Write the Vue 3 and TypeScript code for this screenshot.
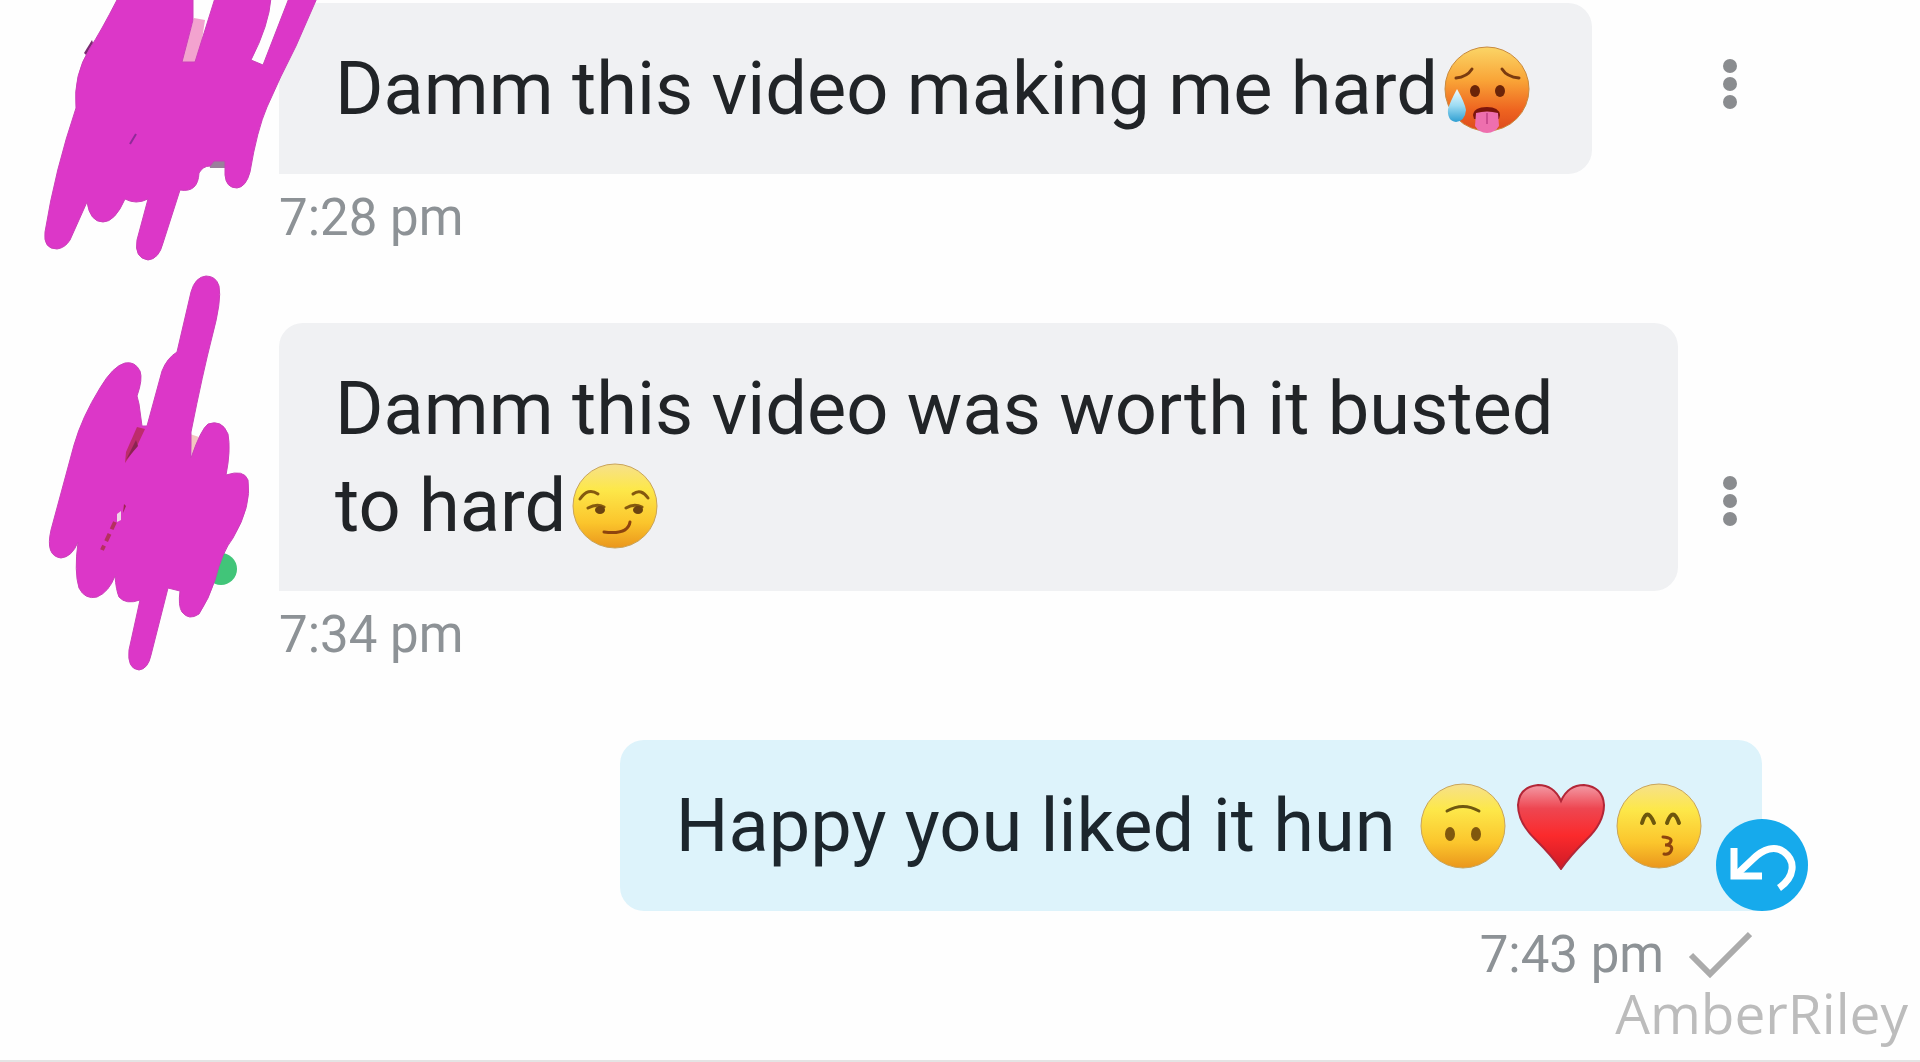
<script setup lang="ts">
type Emoji = 'hot' | 'smirk' | 'upside' | 'heart' | 'kiss'

interface Message {
  id: number
  own: boolean
  text: string
  emojis: Emoji[]
  time: string
}

const messages: Message[] = [
  { id: 1, own: false, text: 'Damm this video making me hard', emojis: ['hot'], time: '7:28 pm' },
  { id: 2, own: false, text: 'Damm this video was worth it busted to hard', emojis: ['smirk'], time: '7:34 pm' },
  { id: 3, own: true, text: 'Happy you liked it hun ', emojis: ['upside', 'heart', 'kiss'], time: '7:43 pm' },
]

const labels: Record<Emoji, string> = {
  hot: 'hot face',
  smirk: 'smirking face',
  upside: 'upside-down face',
  heart: 'red heart',
  kiss: 'kissing face with smiling eyes',
}
</script>

<template>
  <main class="chat">
    <svg class="defs" width="0" height="0" aria-hidden="true">
      <defs>
        <linearGradient id="g-face" x1="0" y1="0" x2="0" y2="1">
          <stop offset="0" stop-color="#f6e08c" />
          <stop offset="0.3" stop-color="#fde84a" />
          <stop offset="0.7" stop-color="#fbc52c" />
          <stop offset="1" stop-color="#ea961c" />
        </linearGradient>
        <linearGradient id="g-hot" x1="0" y1="0" x2="0" y2="1">
          <stop offset="0" stop-color="#fbd566" />
          <stop offset="0.4" stop-color="#f9a437" />
          <stop offset="0.75" stop-color="#ee6420" />
          <stop offset="1" stop-color="#dd4a1c" />
        </linearGradient>
        <linearGradient id="g-heart" x1="0" y1="0" x2="0" y2="1">
          <stop offset="0" stop-color="#f39aa5" />
          <stop offset="0.28" stop-color="#ee4651" />
          <stop offset="0.6" stop-color="#fb2a2c" />
          <stop offset="1" stop-color="#cf1a26" />
        </linearGradient>
        <linearGradient id="g-drop" x1="0" y1="0" x2="0" y2="1">
          <stop offset="0" stop-color="#f2fbfe" />
          <stop offset="0.5" stop-color="#9ddcf3" />
          <stop offset="1" stop-color="#2f9fd2" />
        </linearGradient>
      </defs>
    </svg>

    <article v-for="m in messages" :key="m.id" class="row" :class="{ own: m.own }">
      <div v-if="!m.own" class="avatar">
        <svg v-if="m.id === 1" class="scribble first" viewBox="0 0 320 270" aria-hidden="true">
          <path fill="#f3a3cf" d="M194 18L205 20L198 66H180Z" />
          <path fill="#9a7f9c" d="M208 158H228V168H210Z" />
          <path fill="#7b2a72" d="M92 40L84 53L87 56L94 46Z" />
          <path
            fill="#dc37c8"
            stroke="#cb3fba"
            stroke-width="1"
            d="M118 -2Q100 33 90 48Q73 75 76 108Q55 170 45 232Q43 249 57 249Q65 248 70 240L87 202Q90 222 103 222Q115 222 125 199Q136 205 148 199L137 240Q134 258 148 260Q159 259 163 243L180 190Q198 193 199 173Q203 166 210 166L214 161H225V175Q226 188 237 188Q246 187 250 172Q257 130 267 107Q280 77 296 46L317 -2H289L263 65L251 60Q269 25 271 -2H215L195 62H182L193 20V-2Z"
          />
          <path fill="none" stroke="#8f2a98" stroke-width="2" d="M136 134L130 144" />
        </svg>
        <svg v-else class="scribble second" viewBox="0 270 320 410" aria-hidden="true">
          <circle cx="221" cy="569" r="16" fill="#41c579" />
          <path fill="#f2c5c0" d="M190 434L199 437L192 456Z" />
          <path
            fill="#dc37c8"
            stroke="#cb3fba"
            stroke-width="1"
            d="M206 276Q195 277 191 292L177 352Q167 358 162 371L147 426H142L139 404L137 396Q143 379 140 371Q135 361 125 363Q113 366 100 388Q82 417 74 445L51 530Q45 556 61 558Q72 557 78 542Q74 572 79 588Q85 600 97 597Q109 592 115 576Q116 590 119 597Q126 605 140 600L129 650Q127 669 139 670Q148 669 151 655L168 588L180 591Q178 606 182 612Q189 621 199 614Q209 599 215 580Q222 552 233 538Q252 506 248 480Q244 469 226 475Q231 450 228 434Q222 419 208 424Q201 429 191 458V432Q203 372 212 337Q222 300 219 286Q216 276 206 276Z"
          />
          <path fill="#bd2c6c" d="M137 427L145 429L138 444L125 463L126 452Z" />
          <path fill="#8a2450" d="M136 440L126 460L138 446Z" />
          <path fill="#efd6e6" d="M117 514L121 511V520L117 522Z" />
          <path fill="#9d254f" d="M124 504L126 506L123 513Z" />
          <path fill="none" stroke="#b5305f" stroke-width="4" stroke-dasharray="8 5" d="M115 522L102 550" />
        </svg>
      </div>

      <div class="content">
        <div class="bubble">
          <p class="text">{{ m.text }}<template v-for="e in m.emojis" :key="e"><svg class="emoji" viewBox="0 0 98 88" role="img" :aria-label="labels[e]">
              <template v-if="e === 'hot'">
                <circle cx="49" cy="44" r="42" fill="url(#g-hot)" stroke="#c98a3e" stroke-width="1" />
                <g fill="none" stroke="#7a3b10" stroke-width="3" stroke-linecap="round">
                  <path d="M18 33Q29 32 34 24" />
                  <path d="M64 24Q69 32 81 33" />
                </g>
                <ellipse cx="37" cy="46" rx="5" ry="6" fill="#6b2408" />
                <ellipse cx="62" cy="46" rx="5" ry="6" fill="#6b2408" />
                <path fill="#7c150c" d="M35 70Q36 62 49 62Q61 62 62 70L61 74H36Z" />
                <path fill="#ee6fae" d="M38 68Q49 65 60 68L61 81Q57 88 49 88Q41 88 37 81Z" />
                <path stroke="#cc4c90" stroke-width="2" d="M49 68V79" />
                <path fill="url(#g-drop)" d="M19 44Q12 57 10 64Q9 76 18 77Q27 76 28 65Q27 58 19 44Z" />
              </template>
              <template v-else-if="e === 'smirk'">
                <circle cx="49" cy="44" r="42" fill="url(#g-face)" stroke="#c9a45a" stroke-width="1" />
                <g fill="none" stroke="#84590f" stroke-width="3" stroke-linecap="round">
                  <path d="M14 37Q22 25 32 32" />
                  <path d="M67 32Q75 26 82 36" />
                  <path d="M22 46Q31 41 38 45" />
                  <path d="M60 46Q68 41 76 45" />
                  <path stroke="#8d440e" d="M38 70Q62 73 64 60" />
                </g>
                <ellipse cx="34" cy="48" rx="5" ry="4" fill="#6b4310" />
                <ellipse cx="72" cy="48" rx="5" ry="4" fill="#6b4310" />
              </template>
              <template v-else-if="e === 'upside'">
                <circle cx="49" cy="44" r="42" fill="url(#g-face)" stroke="#c9a45a" stroke-width="1" />
                <path fill="none" stroke="#6f5710" stroke-width="3" stroke-linecap="round" d="M33 29Q49 20 65 29" />
                <ellipse cx="36" cy="52" rx="5" ry="7" fill="#80580e" />
                <ellipse cx="62" cy="52" rx="5" ry="7" fill="#80580e" />
              </template>
              <template v-else-if="e === 'heart'">
                <path
                  fill="url(#g-heart)"
                  stroke="#b32637"
                  stroke-width="2"
                  d="M49 87Q41 75 24 58Q6 41 6 23Q7 5 26 3Q42 3 49 19Q56 3 72 3Q91 5 92 23Q92 41 74 58Q57 75 49 87Z"
                />
              </template>
              <template v-else>
                <circle cx="49" cy="44" r="42" fill="url(#g-face)" stroke="#c9a45a" stroke-width="1" />
                <g fill="none" stroke="#6d570d" stroke-width="4" stroke-linecap="round">
                  <path d="M32 41Q37 24 44 41" />
                  <path d="M57 41Q63 24 69 41" />
                </g>
                <path fill="none" stroke="#8d440e" stroke-width="3" stroke-linecap="round" d="M53 55Q64 56 60 61Q58 63 55 63Q64 63 61 69Q59 73 54 72" />
              </template>
            </svg></template></p>
          <button v-if="m.own" class="undo" type="button" aria-label="Undo">
            <svg viewBox="0 0 92 92" aria-hidden="true">
              <g fill="none" stroke="#fff" stroke-width="7">
                <path d="M18 29V57H46" />
                <path d="M19 57L37 40C47 30 59 26 68 33C80 42 79 58 63 69" />
              </g>
            </svg>
          </button>
        </div>
        <div class="meta">
          <time>{{ m.time }}</time>
          <svg v-if="m.own" class="tick" viewBox="0 0 64 48" role="img" aria-label="Sent">
            <path fill="none" stroke="#ababab" stroke-width="6" d="M3 24L22 43L62 3" />
          </svg>
        </div>
      </div>

      <button v-if="!m.own" class="more" type="button" aria-label="More options">
        <svg viewBox="0 0 16 52" aria-hidden="true">
          <circle cx="8" cy="8" r="7" />
          <circle cx="8" cy="26" r="7" />
          <circle cx="8" cy="44" r="7" />
        </svg>
      </button>
    </article>

    <footer class="credit">AmberRiley</footer>
  </main>
</template>

<style>
body {
  margin: 0;
  background: #fefefe;
}
</style>

<style scoped>
.chat {
  box-sizing: border-box;
  min-height: 100vh;
  padding-top: 3px;
  border-bottom: 2px solid #e4e4e4;
  font-family: Roboto, "Liberation Sans", sans-serif;
  overflow: hidden;
}

.defs {
  position: absolute;
}

.row {
  display: flex;
  align-items: flex-end;
  padding-right: 138px;
  margin-bottom: 75px;
}

.row.own {
  justify-content: flex-end;
  padding-right: 158px;
  margin-bottom: 0;
}

.avatar {
  position: relative;
  flex: none;
  align-self: stretch;
  width: 279px;
}

/* The marker strokes run over the edges of the avatar column. */
.scribble {
  position: absolute;
  left: 0;
  z-index: 1;
  width: 320px;
}

.scribble.first {
  top: -3px;
  height: 270px;
}

.scribble.second {
  top: -53px;
  height: 410px;
}

.content {
  flex: 1;
  min-width: 0;
}

.own .content {
  flex: none;
}

/* The corner that points at the sender stays square. */
.bubble {
  position: relative;
  box-sizing: border-box;
  width: fit-content;
  padding: 37px 56px;
  border-radius: 24px 24px 24px 0;
  background: #f0f1f3;
  color: #212427;
}

.own .bubble {
  padding-right: 54px;
  border-radius: 24px 24px 0 24px;
  background: #ddf3fb;
  color: #1c262d;
}

.text {
  margin: 0;
  font-size: 74px;
  line-height: 97px;
}

.own .text {
  white-space: pre;
}

.emoji {
  width: 98px;
  height: 88px;
  vertical-align: -19px;
}

.meta {
  display: flex;
  align-items: center;
  gap: 24px;
  margin-top: 14px;
  color: #8d9296;
  font-size: 51px;
  line-height: 60px;
}

.own .meta {
  justify-content: flex-end;
  padding-right: 10px;
}

.tick {
  width: 64px;
  height: 48px;
}

button {
  padding: 0;
  border: 0;
  background: none;
  cursor: pointer;
}

.more {
  flex: none;
  width: 104px;
  height: 52px;
  margin-bottom: 138px;
}

.more svg {
  display: block;
  width: 16px;
  height: 52px;
  margin: 0 auto;
  fill: #8a8c8f;
}

.undo {
  position: absolute;
  right: -46px;
  bottom: 0;
  width: 92px;
  height: 92px;
  border-radius: 50%;
  background: #16aaec;
}

.undo svg {
  display: block;
  width: 92px;
  height: 92px;
}

.credit {
  padding-right: 12px;
  color: #bcbcbc;
  font-family: "Open Sans", "Noto Sans", sans-serif;
  font-size: 55px;
  line-height: 56px;
  text-align: right;
}
</style>
